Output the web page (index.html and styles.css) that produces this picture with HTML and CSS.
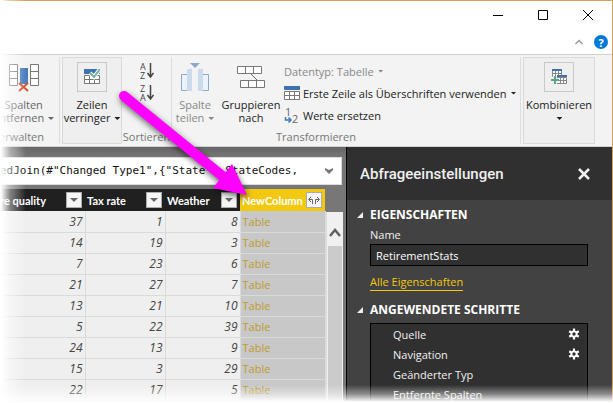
FILE: index.html
```html
<!DOCTYPE html>
<html lang="de">
<head>
<meta charset="utf-8">
<title>Abfrage-Editor</title>
<link rel="stylesheet" href="styles.css">
</head>
<body>
<div class="window">
  <header class="titlebar">
    <div class="caption">
      <button class="plain" aria-label="Minimieren"><svg width="12" height="12" viewBox="0 0 12 12"><path d="M1 6.500h10" class="line-black"/></svg></button>
      <button class="plain" aria-label="Maximieren"><svg width="12" height="12" viewBox="0 0 12 12"><path d="M1.500 1.500h9v9h-9z" class="line-black"/></svg></button>
      <button class="plain" aria-label="Schließen"><svg width="12" height="12" viewBox="0 0 12 12"><path d="M1 1l10 10M11 1L1 11" class="line-black"/></svg></button>
    </div>
    <div class="helpbar">
      <button class="plain" aria-label="Menüband einklappen"><svg width="10" height="8" viewBox="0 0 10 8"><path d="M1.500 6L5 2.500 8.500 6" fill="none" stroke="#999" stroke-width="1.500"/></svg></button>
      <button class="plain help" aria-label="Hilfe">?</button>
    </div>
  </header>

  <nav class="ribbon">
    <section class="group manage">
      <button class="plain tall dim">
        <svg width="32" height="30" viewBox="0 0 32 30"><g fill="#fff" stroke="#777"><path d="M1.500 2.500h8v21h-8zM1.500 9.500h8M1.500 16.500h8M22.500 2.500h8v21h-8zM22.500 9.500h8M22.500 16.500h8"/></g><path d="M12 6h8v16h-8z" fill="#4a7ebb"/><path d="M11 21l9 8M20 21l-9 8" stroke="#d35230" stroke-width="2"/></svg>
        <span>Spalten</span><span>entfernen <i class="tri"></i></span>
      </button>
      <h2>verwalten</h2>
    </section>
    <section class="group framed rows">
      <button class="plain tall">
        <span class="iconbox"><svg width="16" height="16" viewBox="0 0 16 16"><path d="M0 0h16v5H0z" fill="#3f72af"/><path d="M.5 6.500h15v8H.5zM.5 10.500h15M5.500 6v8M10.500 6v8" fill="#fff" stroke="#777"/><path d="M6 4l4 4 6-8" fill="none" stroke="#fff" stroke-width="4"/><path d="M6 4l4 4 6-8" fill="none" stroke="#76b3a0" stroke-width="2"/></svg></span>
        <span>Zeilen</span><span>verringer <i class="tri"></i></span>
      </button>
    </section>
    <section class="group sort">
      <div class="sorts">
        <button class="plain" aria-label="Aufsteigend sortieren"><svg width="14" height="18" viewBox="0 0 14 18"><text x="0" y="8">A</text><text x="0" y="17">Z</text><path d="M10.500 1v13M7.500 11l3 4 3-4" class="line-dark"/></svg></button>
        <button class="plain" aria-label="Absteigend sortieren"><svg width="14" height="18" viewBox="0 0 14 18"><text x="0" y="8">Z</text><text x="0" y="17">A</text><path d="M10.500 1v13M7.500 11l3 4 3-4" class="line-dark"/></svg></button>
      </div>
      <h2>Sortieren</h2>
    </section>
    <section class="group transform">
      <div class="tools">
        <button class="plain tall split disabled">
          <svg width="28" height="30" viewBox="0 0 28 30"><path d="M9 1h10l-5 5z" fill="#8ea7cb"/><path d="M.5 12.500h6v16h-6zM21.500 12.500h6v16h-6z" fill="#eaf3fc" stroke="#8ea7cb"/><path d="M6 7h5v22H6zM17 7h5v22h-5z" fill="#cbdaec"/></svg>
          <span>Spalte</span><span>teilen <i class="tri"></i></span>
        </button>
        <button class="plain tall by">
          <svg width="28" height="30" viewBox="0 0 28 30"><path d="M.5 4.500h24v7H.5zM8.500 4.500v7M16.500 4.500v7M3.500 18.500h24v7h-24zM11.500 18.500v7M19.500 18.500v7" fill="#fff" stroke="#777"/><path d="M14 12l6 6" stroke="#666"/></svg>
          <span>Gruppieren</span><span>nach</span>
        </button>
        <div class="stack">
          <button class="plain disabled">Datentyp: Tabelle <i class="tri"></i></button>
          <button class="plain"><svg width="16" height="16" viewBox="0 0 16 16"><path d="M0 1h16v4H0z" fill="#3f72af"/><path d="M.5 6.500h15v8H.5zM.5 10.500h15M5.500 6v8M10.500 6v8" fill="#fff" stroke="#777"/></svg>Erste Zeile als Überschriften verwenden <i class="tri"></i></button>
          <button class="plain"><svg width="16" height="18" viewBox="0 0 16 18"><text x="1" y="10" class="digit">1</text><text x="8" y="17" class="digit">2</text><path d="M1.500 11v3H7M4.500 11.500L7 14l-2.500 2.500" fill="none" stroke="#3f7ab8" stroke-width="1.500"/></svg>Werte ersetzen</button>
        </div>
      </div>
      <h2>Transformieren</h2>
    </section>
    <section class="group framed combine">
      <button class="plain tall">
        <span class="iconbox"><svg width="16" height="16" viewBox="0 0 16 16"><path d="M1.500 1.500h9v6h-9zM1.500 4.500h9M4.500 1.500v6M7.500 1.500v6M5.500 8.500h10v6h-10zM5.500 11.500h10M9.500 8.500v6M12.500 8.500v6" fill="#fff" stroke="#888"/><path d="M1 0h10v2H1zM6 6h10v2H6z" fill="#3f72af"/><path d="M4 7v8M0 11h8" stroke="#f0f0f0" stroke-width="4"/><path d="M4 7v8M0 11h8" stroke="#5aa58a" stroke-width="2"/></svg></span>
        <span>Kombinieren</span><span><i class="tri"></i></span>
      </button>
    </section>
  </nav>

  <div class="content">
    <main class="workspace">
      <div class="formula">
        <code>edJoin(#"Changed Type1",{"State", StateCodes,</code>
        <button class="plain" aria-label="Formel erweitern"><svg width="8" height="6" viewBox="0 0 8 6"><path d="M0 0l4 2 4-2v2L4 6 0 2z" fill="#777"/></svg></button>
      </div>
      <div class="grid">
        <table>
          <colgroup><col class="c1"><col class="c2"><col class="c3"><col class="c4"></colgroup>
          <thead><tr>
            <th><div class="head first"><span>re quality</span><button class="filter" aria-label="Filter"><i class="tri"></i></button></div></th>
            <th><div class="head"><span>Tax rate</span><button class="filter" aria-label="Filter"><i class="tri"></i></button></div></th>
            <th><div class="head"><span>Weather</span><button class="filter" aria-label="Filter"><i class="tri"></i></button></div></th>
            <th class="new"><div class="head"><span>NewColumn</span><button class="filter" aria-label="Erweitern"><svg width="12" height="8" viewBox="0 0 12 8"><path d="M4.500 8V3.500H1M3 1L.5 3.500 3 6M7.500 8V3.500H11M9 1l2.500 2.500L9 6" fill="none" stroke="#666"/></svg></button></div></th>
          </tr></thead>
          <tbody>
            <tr><td>37</td><td>1</td><td>8</td><td>Table</td></tr>
            <tr><td>14</td><td>19</td><td>3</td><td>Table</td></tr>
            <tr><td>7</td><td>23</td><td>6</td><td>Table</td></tr>
            <tr><td>21</td><td>27</td><td>7</td><td>Table</td></tr>
            <tr><td>13</td><td>21</td><td>10</td><td>Table</td></tr>
            <tr><td>5</td><td>22</td><td>39</td><td>Table</td></tr>
            <tr><td>24</td><td>13</td><td>9</td><td>Table</td></tr>
            <tr><td>15</td><td>3</td><td>29</td><td>Table</td></tr>
            <tr><td>22</td><td>17</td><td>5</td><td>Table</td></tr>
          </tbody>
        </table>
        <div class="scroll">
          <button class="plain" aria-label="Nach oben"><svg width="12" height="10" viewBox="0 0 12 10"><path d="M1 8l5-6 5 6" fill="none" stroke="#606060" stroke-width="2.500"/></svg></button>
          <div class="thumb"></div>
        </div>
      </div>
    </main>
    <aside class="panel">
      <div class="panelhead"><h1>Abfrageeinstellungen</h1><button class="plain" aria-label="Bereich schließen"><svg width="12" height="12" viewBox="0 0 12 12"><path d="M1 1l10 10M11 1L1 11" stroke="#f0f0f0" stroke-width="2.500"/></svg></button></div>
      <div class="panelbody">
        <h3>EIGENSCHAFTEN</h3>
        <label for="name">Name</label>
        <input id="name" type="text" value="RetirementStats">
        <a href="#">Alle Eigenschaften</a>
        <h3>ANGEWENDETE SCHRITTE</h3>
        <ul>
          <li>Quelle <button class="plain" aria-label="Einstellungen"><svg width="12" height="12" viewBox="-6 -6 12 12"><path d="M0-5.500v11M-4.800-2.800l9.600 5.600M-4.800 2.800l9.600-5.600" stroke="#fff" stroke-width="2.200"/><circle r="3.600" fill="#fff"/><circle r="1.700" fill="#303030"/></svg></button></li>
          <li>Navigation <button class="plain" aria-label="Einstellungen"><svg width="12" height="12" viewBox="-6 -6 12 12"><path d="M0-5.500v11M-4.800-2.800l9.600 5.600M-4.800 2.800l9.600-5.600" stroke="#fff" stroke-width="2.200"/><circle r="3.600" fill="#fff"/><circle r="1.700" fill="#303030"/></svg></button></li>
          <li>Geänderter Typ</li>
          <li>Entfernte Spalten</li>
        </ul>
      </div>
    </aside>
  </div>
</div>
<svg class="arrow" width="260" height="210" viewBox="0 0 260 210" aria-hidden="true"><path d="M124 96L226 179" stroke="#f0f" stroke-width="10" stroke-linecap="round"/><path d="M247 195l-34-7 19-24z" fill="#f0f"/></svg>
<div class="fade left"></div>
<div class="fade bottom"></div>
</body>
</html>
```

FILE: styles.css
```css
* { box-sizing: border-box; }
html, body { height: 100%; margin: 0; overflow: hidden; }
body { position: relative; background: #fff; color: #222; font: 11px/13px "Open Sans", "Noto Sans", sans-serif; }
h1, h2, h3, ul { margin: 0; padding: 0; }
svg { display: block; flex: none; }
.plain { display: flex; align-items: center; margin: 0; padding: 0; border: 0; background: none; color: inherit; font: inherit; white-space: nowrap; }
.line-black { fill: none; stroke: #000; }
.line-dark { fill: none; stroke: #444; stroke-width: 1.5; }
.tri { display: inline-block; width: 6px; height: 3px; margin-left: 1px; vertical-align: 2px; background: currentColor; clip-path: polygon(0 0, 100% 0, 50% 100%); }

.window { display: flex; flex-direction: column; height: 100%; border-top: 1px solid #d8a060; border-right: 1px solid #d8a060; }
.titlebar { display: flex; flex-direction: column; align-items: flex-end; height: 53px; flex: none; }
.caption { display: flex; gap: 33px; padding: 8px 18px 0 0; }
.helpbar { display: flex; align-items: center; gap: 10px; padding: 14px 4px 0 0; }
.help { justify-content: center; width: 14px; height: 14px; border-radius: 50%; background: #0078d7; color: #fff; font-weight: 700; }

.ribbon { display: flex; height: 93px; flex: none; padding: 2px 17px 2px 0; border-top: 1px solid #d2d2d2; border-bottom: 1px solid #d2d2d2; background: #f3f3f3; }
.group { display: flex; flex-direction: column; }
.group h2 { margin-top: auto; padding-bottom: 1px; color: #777; font-size: 11px; font-weight: 400; line-height: 13px; text-align: center; }
.tall { flex-direction: column; }
.tall > span { line-height: 13px; }
.tall > svg, .tall > .iconbox { margin-bottom: 6px; }
.manage { width: 60px; align-items: flex-end; padding: 5px 5px 0 0; border-right: 1px solid #ddd; }
.manage h2 { padding-right: 10px; }
.dim { color: #666; }
.framed { align-items: center; margin-left: 2px; padding-top: 4px; border: 1px solid #dadada; background: #efefef; }
.iconbox { display: grid; place-items: center; width: 30px; height: 30px; border: 1px solid #c8c8c8; }
.rows { width: 60px; }
.sort { width: 50px; border-right: 1px solid #ddd; }
.sorts { display: flex; flex-direction: column; align-items: center; gap: 4px; padding-top: 5px; }
.sorts text { fill: #444; font-size: 9px; }
.digit { fill: #666; font-size: 11px; }
.transform { flex: 1; border-right: 1px solid #ddd; }
.transform h2 { padding-right: 60px; }
.tools { display: flex; padding-top: 5px; }
.split { width: 46px; }
.by { width: 66px; }
.stack { display: flex; flex-direction: column; gap: 4px; }
.stack .plain { height: 18px; gap: 3px; }
.disabled { color: #888; }
.combine { width: 72px; }

.content { display: flex; flex: 1; min-height: 0; }
.workspace { display: flex; flex-direction: column; flex: 1; min-width: 0; padding-top: 10px; background: linear-gradient(#666, #777 10px); }
.formula { display: flex; align-items: center; justify-content: space-between; height: 28px; flex: none; margin-right: 4px; padding-right: 8px; border: 1px solid #ddd; border-left: 0; background: #fff; }
.formula code { color: #111; font: 11px/14px "DejaVu Sans Mono", monospace; white-space: nowrap; }
.grid { display: flex; flex: 1; min-height: 0; margin-top: 4px; }
table { width: 325px; border-collapse: collapse; table-layout: fixed; align-self: flex-start; }
.c1 { width: 85px; }
.c2 { width: 80px; }
.c3 { width: 75px; }
.c4 { width: 85px; }
th, td { overflow: hidden; padding: 0; }
th { height: 22px; background: #202020; color: #fff; font-family: Lato, sans-serif; font-size: 11px; text-align: left; }
th.new { background: #f2c811; }
.head { display: flex; align-items: center; justify-content: space-between; padding: 0 3px 0 2px; white-space: nowrap; }
.first { justify-content: flex-end; gap: 20px; }
.filter { display: grid; place-items: center; width: 16px; height: 16px; flex: none; padding: 0; border: 1px solid #ababab; background: #f5f5f5; color: #666; }
.filter .tri { width: 8px; height: 4px; margin: 0; }
td { height: 21px; padding-right: 2px; border-right: 1px solid #dadada; border-bottom: 1px solid #dadada; background: #efefef; color: #444; font-size: 12px; font-style: italic; text-align: right; }
td:last-child { padding-left: 2px; background: #c8c8c8; color: #bf9b2c; font-size: 11px; font-style: normal; text-align: left; }
.scroll { display: flex; flex-direction: column; width: 17px; margin-top: 23px; border-left: 1px solid #ddd; background: #f0f0f0; }
.scroll .plain { justify-content: center; height: 34px; padding-top: 8px; }
.thumb { flex: 1; margin: 0 1px; background: #cbcbcb; }

.panel { width: 266px; flex: none; border-left: 1px solid #000; background: #424242; color: #f0f0f0; }
.panelhead { display: flex; align-items: center; justify-content: space-between; height: 53px; padding: 0 22px 0 13px; background: #303030; }
.panelhead h1 { font: 500 15px/20px Roboto, sans-serif; }
.panelbody { display: flex; flex-direction: column; padding: 7px 24px 0 23px; }
.panelbody h3 { position: relative; color: #fff; font-size: 12px; line-height: 16px; }
.panelbody h3::before { content: ""; position: absolute; left: -13px; top: 5px; width: 6px; height: 6px; background: #eee; clip-path: polygon(100% 0, 100% 100%, 0 100%); }
label { margin: 4px 0 1px; line-height: 16px; }
input { width: 100%; height: 22px; padding: 0 5px; border: 1px solid #000; background: #303030; color: #fff; font: inherit; }
a { align-self: flex-start; margin: 8px 0 11px; border-bottom: 1px solid #f2c811; color: #f2c811; line-height: 16px; text-decoration: none; }
ul { margin-top: 5px; padding: 0 7px 0 22px; border: 1px solid #000; background: #303030; list-style: none; }
li { display: flex; align-items: center; justify-content: space-between; height: 20px; }

.arrow { position: absolute; left: 0; top: 0; pointer-events: none; filter: drop-shadow(1px 3px 3px rgba(0, 0, 0, .6)); }
.fade { position: absolute; left: 0; bottom: 0; pointer-events: none; }
.left { top: 0; width: 26px; background: linear-gradient(to right, #fff 1px, rgba(255, 255, 255, .45) 10px, transparent); }
.bottom { right: 0; height: 18px; background: linear-gradient(to top, #fff 1px, rgba(255, 255, 255, .4) 9px, transparent); }
```
